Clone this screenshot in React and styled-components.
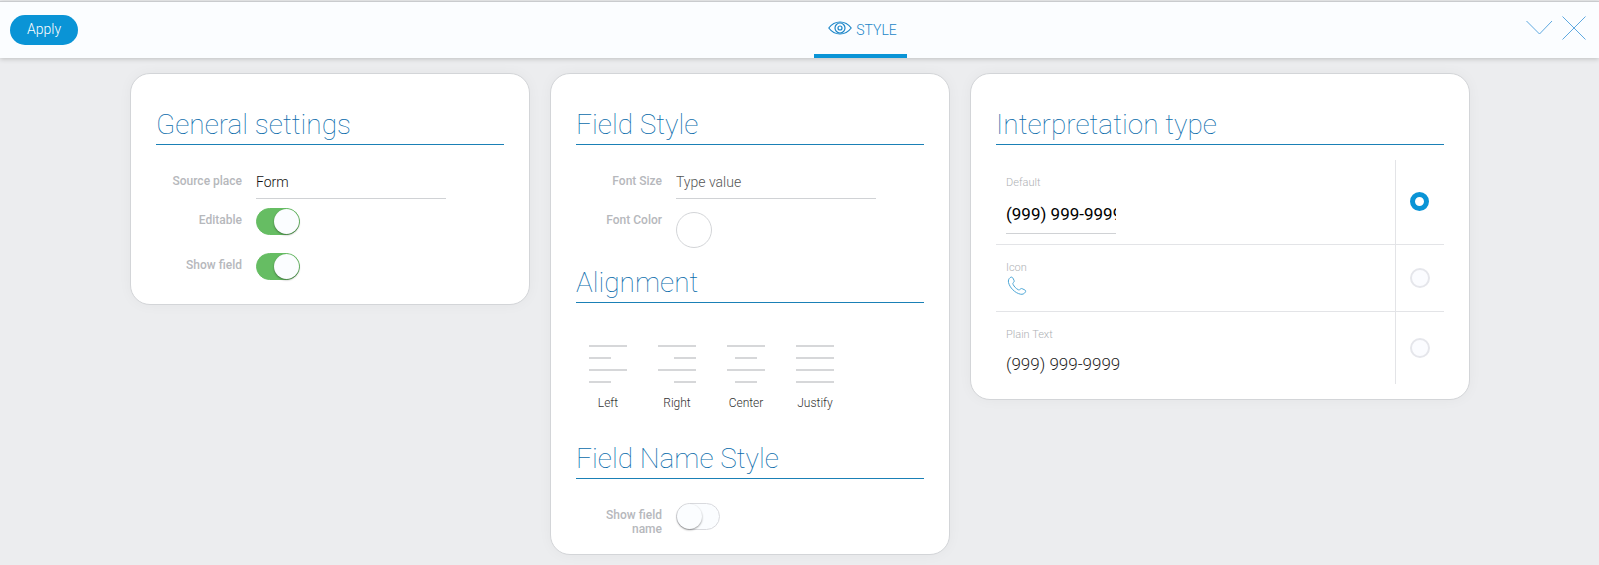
import React, { useState } from "react";
import styled, { createGlobalStyle } from "styled-components";

const GlobalStyle = createGlobalStyle`
  *, *::before, *::after {
    box-sizing: border-box;
  }

  body {
    margin: 0;
    background: #ecedef;
    color: #222;
    font-family: Roboto, "Liberation Sans", sans-serif;
    font-size: 14px;
    font-weight: 300;
  }

  button, input {
    font-family: inherit;
  }
`;

const Header = styled.header`
  display: grid;
  grid-template-columns: 1fr auto 1fr;
  margin-top: 1px;
  height: 57px;
  padding: 0 10px;
  border-top: 1px solid #c9cbce;
  background: #fbfdff;
  box-shadow: 0 1px 5px rgba(0, 0, 0, 0.2);
`;

const ApplyButton = styled.button`
  align-self: center;
  justify-self: start;
  height: 30px;
  padding: 0 17px 2px;
  border: none;
  border-radius: 15px;
  background: #0a94d6;
  color: #fff;
  font-size: 14px;
  font-weight: 300;
  cursor: pointer;
`;

const Tabs = styled.nav`
  display: flex;
  padding-left: 122px;
`;

const Tab = styled.a`
  display: flex;
  align-items: center;
  gap: 4px;
  padding: 4px 10px 0 14px;
  border-bottom: 4px solid #0a94d6;
  color: #1c86c8;
  font-size: 14px;
  text-decoration: none;

  svg {
    margin-bottom: 4px;
  }
`;

const HeaderActions = styled.div`
  display: flex;
  align-items: center;
  justify-content: flex-end;
  gap: 9px;
  padding: 0 3px 4px 0;
`;

const IconButton = styled.button`
  display: flex;
  padding: 0;
  border: none;
  background: none;
  color: #5fa9e0;
  cursor: pointer;
`;

const Panels = styled.main`
  display: flex;
  align-items: flex-start;
  justify-content: center;
  gap: 20px;
  padding: 15px 20px 10px 21px;
`;

const Card = styled.div`
  flex: 0 1 ${({ $wide }) => ($wide ? "500px" : "400px")};
  min-width: 0;
  padding: 16px 25px 11px;
  border: 1px solid #d3d5d8;
  border-radius: 20px;
  background: #fff;
  box-shadow: 0 0 14px rgba(0, 0, 0, 0.04);
`;

const Section = styled.section`
  padding-top: 18px;
`;

const Title = styled.h2`
  margin: 0 0 15px;
  padding-bottom: 2px;
  border-bottom: 1px solid #1a80b6;
  color: #0a6cab;
  font-size: 28px;
  font-weight: 100;
  line-height: 34px;
`;

const Fields = styled.div`
  padding-top: 4px;
`;

const Row = styled.div`
  display: grid;
  grid-template-columns: 86px 1fr;
  column-gap: 14px;
  align-items: start;
  min-height: ${({ $compact }) => ($compact ? "39px" : "45px")};
`;

const Label = styled.label`
  padding-top: 10px;
  color: #b6b8bc;
  font-size: 12px;
  font-weight: 500;
  line-height: 14px;
  text-align: right;
`;

const TextInput = styled.input`
  width: 100%;
  max-width: ${({ $width }) => $width}px;
  height: 35px;
  padding: 2px 0 0;
  border: none;
  border-bottom: 1px solid #d0d2d5;
  outline: none;
  background: transparent;
  color: #111;
  font-size: 14px;
  font-weight: 300;

  &::placeholder {
    color: #555;
    opacity: 1;
  }
`;

const Switch = styled.input`
  appearance: none;
  display: flex;
  width: 44px;
  height: 27px;
  margin: 5px 0 0;
  border: 1px solid #d9dade;
  border-radius: 14px;
  background: #fbfdff;
  cursor: pointer;

  &::before {
    content: "";
    width: 25px;
    height: 25px;
    border-radius: 50%;
    background: #fbfdff;
    box-shadow: 0 1px 2px rgba(0, 0, 0, 0.4);
  }

  &:checked {
    justify-content: flex-end;
    border-color: #66bd63;
    background: #66bd63;
  }
`;

const ColorButton = styled.button`
  width: 36px;
  height: 36px;
  margin-top: 9px;
  padding: 0;
  border: 1px solid #d3d5d8;
  border-radius: 50%;
  background: #fff;
  cursor: pointer;
`;

const AlignList = styled.div`
  display: flex;
  gap: 31px;
  padding: 27px 13px 14px;
`;

const AlignButton = styled.button`
  display: flex;
  flex-direction: column;
  align-items: center;
  gap: 13px;
  width: 38px;
  padding: 0;
  border: none;
  background: none;
  color: #333;
  font-size: 12px;
  font-weight: 300;
  line-height: 14px;
  cursor: pointer;
`;

const Table = styled.table`
  width: 100%;
  margin-bottom: 4px;
  border-collapse: collapse;

  tr + tr {
    border-top: 1px solid #e3e4e7;
  }
`;

const SampleCell = styled.td`
  height: ${({ $height }) => $height}px;
  padding: 16px 10px 0;
  vertical-align: top;
`;

const RadioCell = styled.td`
  width: 49px;
  padding: 0;
  border-left: 1px solid #e3e4e7;
  text-align: center;
  vertical-align: middle;
`;

const Caption = styled.label`
  display: block;
  color: #aeb0b4;
  font-size: 11px;
  line-height: 13px;

  & + svg {
    display: block;
    margin: 2px 0 0 1px;
  }
`;

const PhoneInput = styled.input`
  display: block;
  width: 110px;
  height: 37px;
  margin-top: 8px;
  padding: 0 0 2px;
  border: none;
  border-bottom: 1px solid #d0d2d5;
  outline: none;
  background: transparent;
  color: #000;
  font-size: 17px;
  font-weight: 400;
`;

const PlainText = styled.div`
  margin-top: 13px;
  font-size: 17px;
  line-height: 20px;
`;

const Radio = styled.input`
  appearance: none;
  display: block;
  width: 20px;
  height: 20px;
  margin: 0 auto;
  border: 2px solid #e5e6eb;
  border-radius: 50%;
  background: #fbfcff;
  cursor: pointer;

  &:checked {
    width: 19px;
    height: 19px;
    border: 5px solid #0a94d6;
    background: #fff;
  }
`;

const EyeIcon = () => (
  <svg width="24" height="14" viewBox="0 0 24 14" fill="none" stroke="currentColor" strokeWidth="1.200">
    <path d="M0.800 7C3.600 3.200 7.400 1 12 1s8.400 2.200 11.200 6c-2.800 3.800-6.600 6-11.200 6S3.600 10.800 0.800 7z" />
    <circle cx="12" cy="7" r="5" />
    <circle cx="12" cy="7" r="2" />
  </svg>
);

const ChevronIcon = () => (
  <svg width="28" height="24" viewBox="0 0 28 24" fill="none" stroke="currentColor" strokeWidth="1">
    <path d="M1.500 5L14.500 18L27 5" />
  </svg>
);

const CloseIcon = () => (
  <svg width="24" height="24" viewBox="0 0 24 24" fill="none" stroke="currentColor" strokeWidth="1">
    <path d="M0.500 0.500L23.500 23.500M23.500 0.500L0.500 23.500" />
  </svg>
);

const PhoneIcon = () => (
  <svg width="20" height="20" viewBox="0 0 20 20" fill="none" stroke="#4ba6d6" strokeWidth="1" strokeLinejoin="round">
    <path d="M3.200 1.600C4.200 0.800 5.200 1 5.800 1.900L7 4.300C7.500 5.200 7.200 5.900 6.500 6.400C5.700 7 5.700 7.600 6.100 8.400C7.200 10.600 9 12.600 11.200 13.700C12 14.100 12.600 14 13.100 13.300C13.700 12.600 14.400 12.300 15.200 12.700L17.900 14C18.800 14.500 18.900 15.300 18.300 16.200C17.300 17.800 15.500 18.600 13.500 18.200C7.900 17 2.600 11.500 1.500 6.400C1.100 4.500 1.700 2.700 3.200 1.600Z" />
  </svg>
);

const shortStart = { Left: 0, Right: 16, Center: 8 };

const AlignIcon = ({ type }) => {
  const short = type === "Justify" ? "M0 13h38M0 37h38" : `M${shortStart[type]} 13h22M${shortStart[type]} 37h22`;

  return (
    <svg width="38" height="38" viewBox="0 0 38 38" fill="none" stroke="#d6d7d9" strokeWidth="2">
      <path d={`M0 1h38M0 25h38${short}`} />
    </svg>
  );
};

const Toggle = ({ id, label, initial }) => {
  const [checked, setChecked] = useState(initial);

  return (
    <Row>
      <Label htmlFor={id}>{label}</Label>
      <Switch id={id} type="checkbox" checked={checked} onChange={() => setChecked(state => !state)} />
    </Row>
  );
};

export default function App() {
  const [align, setAlign] = useState(null);
  const [view, setView] = useState("default");

  const radio = (value, label) => (
    <RadioCell>
      <Radio
        type="radio"
        name="interpretation"
        aria-label={label}
        checked={view === value}
        onChange={() => setView(value)}
      />
    </RadioCell>
  );

  return (
    <>
      <GlobalStyle />
      <Header>
        <ApplyButton type="button">Apply</ApplyButton>
        <Tabs>
          <Tab href="#style">
            <EyeIcon />
            STYLE
          </Tab>
        </Tabs>
        <HeaderActions>
          <IconButton type="button" aria-label="Collapse"><ChevronIcon /></IconButton>
          <IconButton type="button" aria-label="Close"><CloseIcon /></IconButton>
        </HeaderActions>
      </Header>

      <Panels>
        <Card>
          <Section>
            <Title>General settings</Title>
            <Fields>
              <Row $compact>
                <Label htmlFor="source">Source place</Label>
                <TextInput id="source" type="text" defaultValue="Form" $width={190} />
              </Row>
              <Toggle id="editable" label="Editable" initial={true} />
              <Toggle id="show-field" label="Show field" initial={true} />
            </Fields>
          </Section>
        </Card>

        <Card>
          <Section>
            <Title>Field Style</Title>
            <Fields>
              <Row $compact>
                <Label htmlFor="font-size">Font Size</Label>
                <TextInput id="font-size" type="text" placeholder="Type value" $width={200} />
              </Row>
              <Row>
                <Label htmlFor="font-color">Font Color</Label>
                <ColorButton id="font-color" type="button" />
              </Row>
            </Fields>
          </Section>
          <Section>
            <Title>Alignment</Title>
            <AlignList>
              {["Left", "Right", "Center", "Justify"].map((type) => (
                <AlignButton key={type} type="button" aria-pressed={align === type} onClick={() => setAlign(type)}>
                  <AlignIcon type={type} />
                  {type}
                </AlignButton>
              ))}
            </AlignList>
          </Section>
          <Section>
            <Title>Field Name Style</Title>
            <Fields>
              <Toggle id="show-name" label="Show field name" initial={false} />
            </Fields>
          </Section>
        </Card>

        <Card $wide>
          <Section>
            <Title>Interpretation type</Title>
            <Table>
              <tbody>
                <tr>
                  <SampleCell $height={84}>
                    <Caption htmlFor="phone">Default</Caption>
                    <PhoneInput id="phone" type="text" defaultValue="(999) 999-9999" />
                  </SampleCell>
                  {radio("default", "Default")}
                </tr>
                <tr>
                  <SampleCell $height={67}>
                    <Caption as="div">Icon</Caption>
                    <PhoneIcon />
                  </SampleCell>
                  {radio("icon", "Icon")}
                </tr>
                <tr>
                  <SampleCell $height={73}>
                    <Caption as="div">Plain Text</Caption>
                    <PlainText>(999) 999-9999</PlainText>
                  </SampleCell>
                  {radio("plain", "Plain Text")}
                </tr>
              </tbody>
            </Table>
          </Section>
        </Card>
      </Panels>
    </>
  );
}
